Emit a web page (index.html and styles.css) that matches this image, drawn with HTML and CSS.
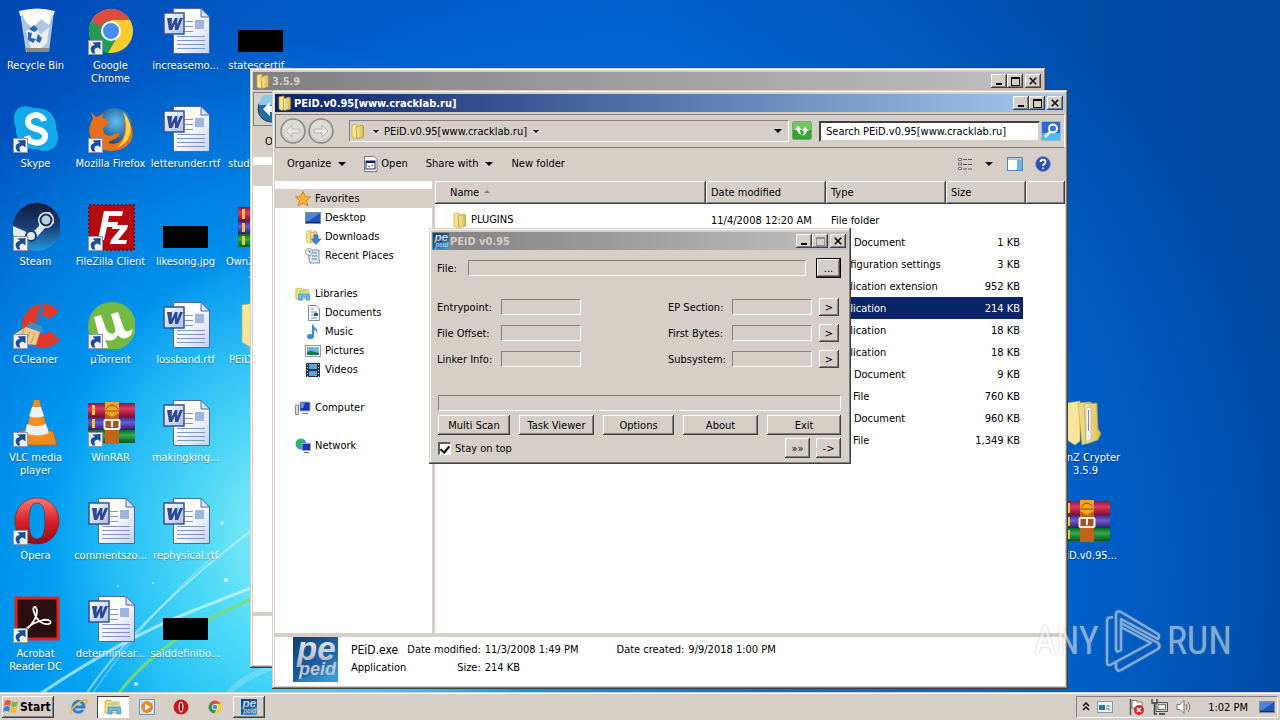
FILE: index.html
```html
<!DOCTYPE html>
<html lang="en">
<head>
<meta charset="utf-8">
<title>Desktop</title>
<link rel="stylesheet" href="styles.css">
</head>
<body>
<svg class="defs" aria-hidden="true">
  <defs>
    <linearGradient id="gPage" x1="0" y1="0" x2="1" y2="1"><stop offset="0.4" stop-color="#fff"/><stop offset="1" stop-color="#c3d3f3"/></linearGradient>
    <linearGradient id="gW" x1="0" y1="0" x2="1" y2="1"><stop offset="0" stop-color="#fff"/><stop offset="1" stop-color="#a9bce8"/></linearGradient>
    <linearGradient id="gFold" x1="0" y1="0" x2="1" y2="0"><stop offset="0" stop-color="#f7eba6"/><stop offset="1" stop-color="#d9b94e"/></linearGradient>
    <linearGradient id="gRed" x1="0" y1="0" x2="0" y2="1"><stop offset="0" stop-color="#8c1338"/><stop offset=".4" stop-color="#e03a66"/><stop offset="1" stop-color="#7d0d2c"/></linearGradient>
    <linearGradient id="gPur" x1="0" y1="0" x2="0" y2="1"><stop offset="0" stop-color="#37267e"/><stop offset=".4" stop-color="#6f5ccf"/><stop offset="1" stop-color="#2d1f6b"/></linearGradient>
    <linearGradient id="gGrn" x1="0" y1="0" x2="0" y2="1"><stop offset="0" stop-color="#0c6425"/><stop offset=".4" stop-color="#2fae4d"/><stop offset="1" stop-color="#0a5420"/></linearGradient>
    <linearGradient id="gSteam" x1="0" y1="0" x2="0" y2="1"><stop offset="0" stop-color="#131a3a"/><stop offset=".5" stop-color="#1a3f78"/><stop offset="1" stop-color="#1f9bd8"/></linearGradient>
    <linearGradient id="gOp" x1="0" y1="0" x2="0" y2="1"><stop offset="0" stop-color="#f57a72"/><stop offset=".5" stop-color="#d8232a"/><stop offset="1" stop-color="#8e0c12"/></linearGradient>
    <linearGradient id="gPe" x1="0" y1="0" x2="1" y2="1"><stop offset="0" stop-color="#0f3d73"/><stop offset=".6" stop-color="#1d63a6"/><stop offset="1" stop-color="#37a0d8"/></linearGradient>
    <linearGradient id="gSilver" x1="0" y1="0" x2="0" y2="1"><stop offset="0" stop-color="#fff"/><stop offset="1" stop-color="#a4adba"/></linearGradient>
    <radialGradient id="gFox" cx=".55" cy=".35" r=".6"><stop offset="0" stop-color="#5fc3ee"/><stop offset="1" stop-color="#123a7c"/></radialGradient>
    <symbol id="arrow" viewBox="0 0 15 15"><rect x=".5" y=".5" width="14" height="14" fill="#eef2f8" stroke="#8e98a8"/><path d="M4.500 13.500C1 9 3 5 7 5L4.500 2.500 12.500 2 12.500 9.500 10 7.500C6.500 8 5.500 10 7.500 13.500Z" fill="#1c4c96"/></symbol>
    <symbol id="word" viewBox="0 0 48 48"><path d="M11.500 1.500H39L47.500 10V46.500H11.500Z" fill="url(#gPage)" stroke="#4c68a8"/><path d="M39 1.500V10H47.500Z" fill="#dbe5f8" stroke="#4c68a8"/><path d="M23 14.500H31M23 19.500H31M23 24.500H31M15 29.500H43M15 33.500H43M15 37.500H43M15 41.500H43" stroke="#7f95c4"/><rect x="33" y="13" width="9" height="9" fill="#9fb4de"/><rect x="2" y="6" width="20" height="21" fill="url(#gW)" stroke="#33509c" stroke-width="1.500"/><path d="M5 11H10L9.500 18 13 11H15.500L15 18 18 11H21L16 23H13L13 17 10 23H7Z" fill="#2c4896"/></symbol>
    <symbol id="black" viewBox="0 0 48 48"><rect x="1" y="23" width="45" height="22"/></symbol>
    <symbol id="winrar" viewBox="0 0 48 48"><rect x="1" y="4" width="47" height="14" fill="url(#gRed)"/><rect x="1" y="18" width="47" height="13" fill="url(#gPur)"/><rect x="1" y="31" width="47" height="13" fill="url(#gGrn)"/><path d="M6.500 6V16M6.500 20V29M6.500 33V42" stroke="#f2c63c" stroke-width="3"/><rect x="18" y="3" width="14" height="42" fill="#c0641c"/><path d="M18 3H32V14L25 18 18 14Z" fill="#f0a524"/><path d="M19 10Q25 2 31 10M18 12H32" fill="none" stroke="#8a4a10"/><rect x="17.500" y="21" width="15" height="9" rx="1" fill="#a9551a" stroke="#f2f2f2" stroke-width="2"/><path d="M25 22V28" stroke="#fff" stroke-width="2"/></symbol>
    <symbol id="bigfolder" viewBox="0 0 48 48"><path d="M5 4L18 2V42L13 46 5 41Z" fill="#f5e69c" stroke="#c9a847" stroke-width=".6"/><path d="M16 4L29 3V43L20 46Z" fill="#ecd880" stroke="#c9a847" stroke-width=".6"/><path d="M22 5L35 4 36 30 39 34 36 41 24 45Z" fill="url(#gFold)" stroke="#b8973c" stroke-width=".6"/><path d="M24 9L29 8V40L24 43Z" fill="#f4f4f4" stroke="#aaa" stroke-width=".6"/><path d="M26.500 11V32" stroke="#8f8b84"/></symbol>
    <symbol id="folder" viewBox="0 0 16 16"><path d="M2 2L7 1V14L5 15.500 2 14Z" fill="#f6e68e" stroke="#c2a035" stroke-width=".7"/><path d="M6 4L12 2 13.500 3V14L7 15.500Z" fill="url(#gFold)" stroke="#b18e2a" stroke-width=".7"/></symbol>
    <symbol id="pe" viewBox="0 0 45 45"><rect width="45" height="45" fill="url(#gPe)"/><path d="M0 45L45 26V45Z" fill="#3fa5dd" opacity=".4"/><text x="4" y="23" font-family="Liberation Sans" font-weight="bold" font-style="italic" font-size="33" fill="url(#gSilver)">pe</text><text x="6" y="38" font-family="Liberation Sans" font-weight="bold" font-style="italic" font-size="18" fill="#bcc3ce">peid</text></symbol>
    <symbol id="chrome" viewBox="0 0 48 48"><circle cx="24" cy="24" r="22" fill="#fbcc2d"/><path d="M5 13A22 22 0 0 0 21 46L31 29 15 29Z" fill="#229b57"/><path d="M5 13L15 30 24 24 24 13Z" fill="#229b57"/><path d="M5 13A22 22 0 0 1 43 13H24A11 11 0 0 0 13.500 21Z" fill="#dd4b3e"/><circle cx="24" cy="24" r="10" fill="#fff"/><circle cx="24" cy="24" r="8" fill="#4b8bf0"/></symbol>
    <symbol id="opera" viewBox="0 0 48 48"><path fill-rule="evenodd" d="M25 1C38 1 47 11 47 24S38 47 25 47 3 37 3 24 12 1 25 1ZM25 6C19 6 17 13 17 24S19 42 25 42 33 35 33 24 31 6 25 6Z" fill="url(#gOp)" stroke="#8e0c12" stroke-width=".6"/></symbol>
    <symbol id="lib" viewBox="0 0 18 16"><path d="M1 14V3L2 1.500H7L8 3H15V14Z" fill="#f4de7c" stroke="#c9a93a" stroke-width=".8"/><path d="M4 4H13V6H4Z" fill="#a8d89a"/><path d="M4 15V8H16.500V15H13V11.500H8V15Z" fill="#6bb8e8" stroke="#3888c0" stroke-width=".7"/></symbol>
    <symbol id="screen" viewBox="0 0 16 16"><rect x=".5" y="2.500" width="15" height="11" fill="#1e56b5" stroke="#889"/><path d="M1 3H15L4 11H1Z" fill="#4d84da"/><path d="M1 12H15V13H1Z" fill="#0b2c66"/></symbol>
  </defs>
</svg>

<main class="desktop">
  <svg class="wallpaper" viewBox="0 0 1280 692" preserveAspectRatio="none" aria-hidden="true">
    <g fill="none" stroke-linecap="round">
      <path d="M40 694Q120 640 190 612T300 570" stroke="#d8fbff" stroke-width="3" opacity=".65"/>
      <path d="M86 694Q150 600 300 495" stroke="#e8ffff" stroke-width="2" opacity=".5"/>
      <path d="M92 694Q150 610 215 555" stroke="#fff" stroke-width="1" opacity=".5"/>
      <path d="M118 694Q170 625 300 580" stroke="#7fdc66" stroke-width="3" opacity=".85"/>
      <path d="M230 692Q250 670 300 660" stroke="#fff" stroke-width="6" opacity=".2"/>
    </g>
    <g fill="#fff" opacity=".7"><circle cx="222" cy="523" r="1.500"/><circle cx="226" cy="580" r="2"/><circle cx="153" cy="583" r="1"/><circle cx="118" cy="586" r="1"/><circle cx="136" cy="684" r="2"/></g>
  </svg>

  <section class="icons" aria-label="Desktop icons">
    <div class="ic"><svg viewBox="0 0 48 48"><path d="M8 5L42 4 37 45H14Z" fill="#cfdbe6" opacity=".85"/><path d="M7 4Q25 -1 43 4L41 9Q24 4 8 9Z" fill="#f0f5f9"/><path d="M11 9L17 3 25 7 32 2 40 8 37 18 29 12 21 21 14 15Z" fill="#fff"/><path d="M14 24L22 19 29 27 37 20 35 36 28 42 19 42Z" fill="#e9eff4"/><path d="M17 22L22 18 26 22 23 25 20 24ZM16 25L20 26 19 31 24 32 21 36 16 33ZM26 27L30 31 28 36 24 34Z" fill="#2a66c2"/><path d="M14 41H37V45H15Z" fill="#8d857f"/></svg><span>Recycle Bin</span></div>
    <div class="ic"><svg viewBox="0 0 48 48"><path d="M9 2C15 0 18 3 23 3 37 2 45 12 44 24 49 33 45 45 34 46 28 47 28 44 24 44 11 46 3 34 4 23 0 14 2 4 9 2Z" fill="#12a9ea"/><path d="M32 16C30 8 16 8 16 17 16 26 33 22 33 31 33 40 17 40 15 31" fill="none" stroke="#fff" stroke-width="6"/><use href="#arrow" x="1" y="33" width="15" height="15"/></svg><span>Skype</span></div>
    <div class="ic"><svg viewBox="0 0 48 48"><circle cx="25" cy="24" r="24" fill="url(#gSteam)"/><path d="M1 23L19 31 27 23 28 12 38 9 42 20 33 25 24 35 14 40 1 32Z" fill="#e3ebf3"/><circle cx="34" cy="17" r="8" fill="#e3ebf3"/><circle cx="34" cy="17" r="5.500" fill="#b8cfe6" stroke="#1b2b54" stroke-width="2"/><circle cx="19" cy="33" r="5" fill="#e3ebf3" stroke="#1b3c6c" stroke-width="2"/><use href="#arrow" x="1" y="33" width="15" height="15"/></svg><span>Steam</span></div>
    <div class="ic"><svg viewBox="0 0 48 48"><path d="M47 10L38 18C30 10 24 18 25 25 27 36 34 34 38 30L48 39C36 52 12 49 10 27 9 4 34-5 47 10Z" fill="#dd3a2c"/><path d="M30 5L25 24" stroke="#2b77b8" stroke-width="4" stroke-linecap="round"/><path d="M18 21L30 25 31 32 13 27Z" fill="#3e8ec8"/><path d="M14 26L28 31 24 44 3 42 1 34Z" fill="#f3c98c"/><path d="M12 28L8 39M18 30L14 41M23 32L19 42" stroke="#cb9350"/><use href="#arrow" x="1" y="33" width="15" height="15"/></svg><span>CCleaner</span></div>
    <div class="ic"><svg viewBox="0 0 48 48"><path d="M9 32H41L45 46H5Z" fill="#f08a1c" stroke="#c96206"/><path d="M22 1H27L37 36Q25 43 13 36Z" fill="#f28d22"/><path d="M20 8H29L32 17Q24 20 17 17ZM15 25Q24 29 34 25L37 34Q25 39 13 34Z" fill="#edf0f2"/><use href="#arrow" x="1" y="33" width="15" height="15"/></svg><span>VLC media player</span></div>
    <div class="ic"><svg viewBox="0 0 48 48"><use href="#opera"/><use href="#arrow" x="1" y="33" width="15" height="15"/></svg><span>Opera</span></div>
    <div class="ic"><svg viewBox="0 0 48 48"><rect x="4" y="3" width="42" height="41" fill="#2b0e10" stroke="#e2251b" stroke-width="3"/><path d="M13 35C20 31 25 22 25 16 24 9 20 12 22 17 25 27 32 30 37 29 41 27 37 24 31 25 24 27 18 29 13 35" fill="none" stroke="#fff" stroke-width="1.800"/><use href="#arrow" x="1" y="33" width="15" height="15"/></svg><span>Acrobat Reader DC</span></div>

    <div class="ic"><svg viewBox="0 0 48 48"><use href="#chrome"/><use href="#arrow" x="1" y="33" width="15" height="15"/></svg><span>Google Chrome</span></div>
    <div class="ic"><svg viewBox="0 0 48 48"><circle cx="27" cy="23" r="20" fill="url(#gFox)"/><path d="M4 7L9 12 16 9 15 13 19 14 22 19 16 23 17 28C24 35 29 26 33 29 29 36 21 35 22 38 34 42 41 29 37 14 45 18 48 27 44 36 36 49 13 50 5 35 0 27 3 18 6 14Z" fill="#e87018"/><path d="M36 7C49 20 45 38 29 43 39 36 42 22 36 7Z" fill="#fbd44a"/><use href="#arrow" x="1" y="33" width="15" height="15"/></svg><span>Mozilla Firefox</span></div>
    <div class="ic"><svg viewBox="0 0 48 48"><rect x="2" y="2" width="45" height="45" fill="#b50c10" stroke="#8a0508" stroke-width="2" stroke-dasharray="2 2"/><path d="M17 8H36L35 13H22L21 19H31L30 24H20L17 37H11Z" fill="#fff"/><path d="M26 22H41L40 26 31 37H40L39 41H23L24 37 33 26H25Z" fill="#fff"/><use href="#arrow" x="1" y="33" width="15" height="15"/></svg><span>FileZilla Client</span></div>
    <div class="ic"><svg viewBox="0 0 48 48"><circle cx="25" cy="25" r="24" fill="#74b943"/><path d="M7 16L14 14 19 28C22 35 30 34 28 27L24 13 31 11 37 28C39 32 43 30 46 28L44 34C39 39 34 38 31 34 28 40 22 41 18 38L21 47 15 47Z" fill="#fff"/><use href="#arrow" x="1" y="33" width="15" height="15"/></svg><span>µTorrent</span></div>
    <div class="ic"><svg viewBox="0 0 48 48"><use href="#winrar"/><use href="#arrow" x="1" y="33" width="15" height="15"/></svg><span>WinRAR</span></div>
    <div class="ic"><svg><use href="#word"/></svg><span>commentszo...</span></div>
    <div class="ic"><svg><use href="#word"/></svg><span>determinear...</span></div>

    <div class="ic"><svg><use href="#word"/></svg><span>increasemo...</span></div>
    <div class="ic"><svg><use href="#word"/></svg><span>letterunder.rtf</span></div>
    <div class="ic"><svg><use href="#black"/></svg><span>likesong.jpg</span></div>
    <div class="ic"><svg><use href="#word"/></svg><span>lossband.rtf</span></div>
    <div class="ic"><svg><use href="#word"/></svg><span>makingking...</span></div>
    <div class="ic"><svg><use href="#word"/></svg><span>rephysical.rtf</span></div>
    <div class="ic"><svg><use href="#black"/></svg><span>saiddefinitio...</span></div>

    <div class="ic"><svg><use href="#black"/></svg><span>statescertif...</span></div>
    <div class="ic ic-start"><svg></svg><span>stud</span></div>
    <div class="ic"><svg><use href="#winrar"/></svg><span>OwnZ Crypter 3.5.9</span></div>
    <div class="ic"><svg><use href="#bigfolder"/></svg><span>PEiD.v0.95...</span></div>
    <div class="ic ic-far5"><svg><use href="#bigfolder"/></svg><span>OwnZ Crypter 3.5.9</span></div>
    <div class="ic ic-far6"><svg><use href="#winrar"/></svg><span>PEiD.v0.95...</span></div>
  </section>

  <section class="win win-back" aria-label="3.5.9">
    <header class="title title-off"><svg class="i16"><use href="#folder"/></svg><h2>3.5.9</h2>
      <button class="cap" aria-label="Minimize"><i class="g-min"></i></button><button class="cap" aria-label="Maximize"><i class="g-max"></i></button><button class="cap cap-x" aria-label="Close"><svg viewBox="0 0 10 10"><path d="M1 1L9 9M9 1L1 9"/></svg></button></header>
    <div class="navbar"><svg class="round" viewBox="0 0 28 28"><circle cx="14" cy="14" r="13" fill="#1f6fa6" stroke="#334"/><path d="M2 10A12 12 0 0 1 26 10Z" fill="#8fc8e6"/><path d="M6 14L13 7V11H22V17H13V21Z" fill="#fff"/></svg></div>
    <div class="back-tools">Organize</div>
    <div class="back-side"></div>
    <div class="back-body"></div>
    <div class="back-foot"></div>
  </section>

  <section class="win win-front" aria-label="PEiD.v0.95[www.cracklab.ru]">
    <header class="title title-on"><svg class="i16"><use href="#folder"/></svg><h2>PEiD.v0.95[www.cracklab.ru]</h2>
      <button class="cap" aria-label="Minimize"><i class="g-min"></i></button><button class="cap" aria-label="Maximize"><i class="g-max"></i></button><button class="cap cap-x" aria-label="Close"><svg viewBox="0 0 10 10"><path d="M1 1L9 9M9 1L1 9"/></svg></button></header>
    <div class="navbar">
      <button class="plain" aria-label="Back"><svg class="round" viewBox="0 0 28 28"><circle cx="14" cy="14" r="12" fill="#cfcdc9" stroke="#8a8884" stroke-width="1.500"/><circle cx="14" cy="13" r="10" fill="#dddbd8"/><path d="M7 14L13 8V12H21V16H13V20Z" fill="#e9e8e6" stroke="#b7b4b0"/></svg></button>
      <button class="plain" aria-label="Forward"><svg class="round" viewBox="0 0 28 28"><circle cx="14" cy="14" r="12" fill="#cfcdc9" stroke="#8a8884" stroke-width="1.500"/><circle cx="14" cy="13" r="10" fill="#dddbd8"/><path d="M21 14L15 8V12H7V16H15V20Z" fill="#e9e8e6" stroke="#b7b4b0"/></svg></button>
      <div class="address"><svg class="i16"><use href="#folder"/></svg><i class="tri tri-s"></i><span>PEiD.v0.95[www.cracklab.ru]</span><i class="tri tri-s"></i><i class="tri tri-end"></i></div>
      <button class="plain" aria-label="Refresh"><svg class="i20" viewBox="0 0 20 20"><rect x=".5" y=".5" width="19" height="18" rx="2" fill="#2fa52f" stroke="#7f9f7f"/><path d="M1 1H19V9H1Z" fill="#6ccb60"/><path d="M6 5L3 9H5Q6 13 10 14 8 12 8 9H10ZM13 6L10 10H12Q12 13 10 15 14 14 15 10H17Z" fill="#fff"/></svg></button>
      <input class="search" aria-label="Search" value="Search PEiD.v0.95[www.cracklab.ru]">
      <button class="plain" aria-label="Search"><svg class="i20" viewBox="0 0 20 20"><rect x=".5" y=".5" width="19" height="19" rx="1" fill="#2d68d6" stroke="#9db4d8"/><path d="M1 12H19V19H1Z" fill="#4fb8ee"/><circle cx="12" cy="7.500" r="4" fill="#3c74dd" stroke="#fff" stroke-width="2"/><path d="M9 11L4 16" stroke="#fff" stroke-width="2.500"/></svg></button>
    </div>
    <div class="tools">
      <button class="tool">Organize<i class="tri"></i></button>
      <button class="tool"><svg class="i14" viewBox="0 0 14 16"><path d="M.5.500H10L13 3.500V15.500H.5Z" fill="#fff" stroke="#777"/><rect x="2" y="5" width="9" height="8" fill="#fff" stroke="#15206b"/><path d="M2 6H11" stroke="#15206b" stroke-width="2"/><path d="M4 10L6 11M7 10L9 9" stroke="#b33"/></svg>Open</button>
      <button class="tool">Share with<i class="tri"></i></button>
      <button class="tool">New folder</button>
      <button class="tool push" aria-label="Views"><svg class="i16" viewBox="0 0 16 16"><path d="M1.500 2.500h3v2h-3zM1.500 7h3v2h-3zM1.500 11.500h3v2h-3z" fill="#fff" stroke="#668"/><path d="M6 3.500H15M6 8.500H15M6 13H15" stroke="#555" stroke-dasharray="4 1"/></svg><i class="tri"></i></button>
      <button class="tool" aria-label="Preview pane"><svg class="i16" viewBox="0 0 16 16"><rect x=".5" y="1.500" width="15" height="13" fill="#fff" stroke="#4e86b8"/><path d="M1 2H15V4H1Z" fill="#9dc8e8"/><path d="M10 4H15V14H10Z" fill="#6fb2e2"/></svg></button>
      <button class="tool" aria-label="Help"><svg class="i16" viewBox="0 0 16 16"><circle cx="8" cy="8" r="7.500" fill="#2850b4" stroke="#8a99bd"/><path d="M5.500 6C5.500 3 10.500 3 10.500 6 10.500 8 8 8 8 10M8 11.500V13" fill="none" stroke="#fff" stroke-width="1.800"/></svg></button>
    </div>
    <div class="panes">
      <nav class="tree" aria-label="Folders">
        <ul>
          <li class="top on"><svg class="i16" viewBox="0 0 16 16"><path d="M8 .5L10.300 5.500 15.500 6 11.500 9.500 13 15 8 12 3 15 4.500 9.500.5 6 5.700 5.500Z" fill="#f8b73a" stroke="#d9821a"/></svg>Favorites</li>
          <li><svg class="i16"><use href="#screen"/></svg>Desktop</li>
          <li><svg class="i16" viewBox="0 0 16 16"><use href="#folder" width="14" height="15"/><path d="M9 6H13V10H16L11 15.500 6.500 10H9Z" fill="#2f8be0" stroke="#1760a8" stroke-width=".6"/></svg>Downloads</li>
          <li><svg class="i16" viewBox="0 0 16 16"><path d="M4 2H14V12L15 15H5L4 12Z" fill="#dde6ee" stroke="#8090a0"/><path d="M8 5H12M7 8H12M7 11H12" stroke="#5581b2"/><circle cx="4" cy="4" r="3.500" fill="#fff" stroke="#8898a8"/><path d="M4 2V4H6" stroke="#456" fill="none"/></svg>Recent Places</li>
        </ul>
        <ul>
          <li class="top"><svg class="i16"><use href="#lib"/></svg>Libraries</li>
          <li><svg class="i16" viewBox="0 0 16 16"><path d="M3.500.5H11L14.500 4V15.500H3.500Z" fill="#fff" stroke="#7c8ea0"/><path d="M6 4H9M6 7H12M6 10H9M6 13H12" stroke="#5d8fc4"/><path d="M9 8H13V11H9Z" fill="#335a88"/></svg>Documents</li>
          <li><svg class="i16" viewBox="0 0 16 16"><path d="M8 .5C9 4 14 5 12 10 12 7 10 6 9 6V13C8 16 2 16 2 12.500 2 10 5 9.500 7 10.500V.5Z" fill="#2e8fe0"/></svg>Music</li>
          <li><svg class="i16" viewBox="0 0 16 16"><rect x=".5" y="2.500" width="15" height="11" fill="#fff" stroke="#8b9baa"/><rect x="2" y="4" width="12" height="8" fill="#69b5e6"/><path d="M2 9L6 8 14 10V12H2Z" fill="#1d6b50"/></svg>Pictures</li>
          <li><svg class="i16" viewBox="0 0 16 16"><rect x="1" y="1" width="14" height="14" fill="#27303c"/><path d="M4 2H12V7H4ZM4 9H12V14H4Z" fill="#55a5e0"/><path d="M2.500 2V15M13.500 2V15" stroke="#dde" stroke-dasharray="1 2"/></svg>Videos</li>
        </ul>
        <ul>
          <li class="top"><svg class="i16" viewBox="0 0 16 16"><path d="M.5 5H3.500V14.500H.5Z" fill="#d8dbe0" stroke="#888"/><path d="M5 2H15V11H5Z" fill="#1a35b8" stroke="#a0a8b8"/><path d="M6 3H10L8 8H6Z" fill="#7290ee"/><path d="M7 13H13V14H7Z" fill="#777"/></svg>Computer</li>
        </ul>
        <ul>
          <li class="top"><svg class="i16" viewBox="0 0 16 16"><circle cx="6" cy="6" r="5.500" fill="#2b9fd6"/><path d="M2 3Q6-1 7 3 9 6 4 7 4 11 2 9Z" fill="#3bb44a"/><path d="M7 5.500H15.500V12.500H7Z" fill="#1a35b8" stroke="#a0a8b8"/><path d="M9 14.500H14" stroke="#667"/></svg>Network</li>
        </ul>
      </nav>
      <div class="files">
        <table>
          <colgroup><col class="c-name"><col class="c-date"><col class="c-type"><col class="c-size"><col></colgroup>
          <thead><tr><th class="th-name">Name<i class="sort"></i></th><th>Date modified</th><th>Type</th><th>Size</th><th></th></tr></thead>
          <tbody>
            <tr><td class="td-name"><svg class="i16"><use href="#folder"/></svg>PLUGINS</td><td>11/4/2008 12:20 AM</td><td>File folder</td><td></td></tr>
            <tr><td></td><td></td><td>Text Document</td><td>1 KB</td></tr>
            <tr><td></td><td></td><td>Configuration settings</td><td>3 KB</td></tr>
            <tr><td></td><td></td><td>Application extension</td><td>952 KB</td></tr>
            <tr class="sel"><td></td><td></td><td>Application</td><td>214 KB</td></tr>
            <tr><td></td><td></td><td>Application</td><td>18 KB</td></tr>
            <tr><td></td><td></td><td>Application</td><td>18 KB</td></tr>
            <tr><td></td><td></td><td>Text Document</td><td>9 KB</td></tr>
            <tr><td></td><td></td><td>SFX File</td><td>760 KB</td></tr>
            <tr><td></td><td></td><td>Text Document</td><td>960 KB</td></tr>
            <tr><td></td><td></td><td>SFX File</td><td>1,349 KB</td></tr>
          </tbody>
        </table>
      </div>
    </div>
    <footer class="details">
      <svg class="i45"><use href="#pe"/></svg>
      <div class="d-name"><strong>PEiD.exe</strong><span>Application</span></div>
      <dl><dt>Date modified:</dt><dd>11/3/2008 1:49 PM</dd><dt>Size:</dt><dd>214 KB</dd></dl>
      <dl class="d-last"><dt>Date created:</dt><dd>9/9/2018 1:00 PM</dd></dl>
    </footer>
  </section>

  <section class="win dialog" aria-label="PEiD v0.95">
    <header class="title title-off"><svg class="i16"><use href="#pe"/></svg><h2>PEiD v0.95</h2>
      <button class="cap" aria-label="Minimize"><i class="g-min"></i></button><button class="cap" aria-label="Maximize" disabled><i class="g-max"></i></button><button class="cap cap-x" aria-label="Close"><svg viewBox="0 0 10 10"><path d="M1 1L9 9M9 1L1 9"/></svg></button></header>
    <form class="form">
      <div class="f-file"><label for="file">File:</label><input id="file" class="sunk"><button type="button" class="btn btn-def">...</button></div>
      <div class="f-grid">
        <label for="ep">Entrypoint:</label><input id="ep" class="sunk"><label for="sec">EP Section:</label><input id="sec" class="sunk"><button type="button" class="btn">&gt;</button>
        <label for="off">File Offset:</label><input id="off" class="sunk"><label for="fb">First Bytes:</label><input id="fb" class="sunk"><button type="button" class="btn">&gt;</button>
        <label for="li">Linker Info:</label><input id="li" class="sunk"><label for="sub">Subsystem:</label><input id="sub" class="sunk"><button type="button" class="btn">&gt;</button>
      </div>
      <input class="sunk f-status" aria-label="Result">
      <div class="f-btns"><button type="button" class="btn">Multi Scan</button><button type="button" class="btn">Task Viewer</button><button type="button" class="btn">Options</button><button type="button" class="btn">About</button><button type="button" class="btn">Exit</button></div>
      <div class="f-last"><input type="checkbox" id="top" class="check" checked><label for="top">Stay on top</label><button type="button" class="btn">»»</button><button type="button" class="btn">-&gt;</button></div>
    </form>
  </section>

  <div class="mark"><span>ANY</span><svg viewBox="0 0 56 62"><path d="M8 7L3 8Q2 9 2 12V52Q2 57 7 54L46 33 16 17M11 41V4Q12 0 16 2L53 24Q55 26 53 29L16 9V40L11 42M11 53V58Q12 62 16 60L53 39Q56 36 53 33L16 13" fill="none" stroke="#fff" stroke-width="2.500" stroke-linejoin="round"/></svg><span>RUN</span></div>
</main>

<footer class="taskbar">
  <button class="start"><svg class="i18" viewBox="0 0 18 18"><path d="M3 3Q6 1 9 3L8 8Q5 6 2 8Z" fill="#e8572a"/><path d="M10 3Q13 5 16 3L15 8Q12 10 9 8Z" fill="#7cb93a"/><path d="M2 9Q5 7 8 9L7 14Q4 12 1 14Z" fill="#3a85d8"/><path d="M9 9Q12 11 15 9L14 14Q11 16 8 14Z" fill="#f6bb25"/></svg>Start</button>
  <button class="task" aria-label="Internet Explorer"><svg class="i18" viewBox="0 0 18 18"><path d="M13 12A5.500 5.500 0 1 1 14 9H5" fill="none" stroke="#2a7fd4" stroke-width="3"/><path d="M1 16C-1 12 10 1 16 2 18 3 16 6 15 7" fill="none" stroke="#e8b92c" stroke-width="1.500"/></svg></button>
  <button class="task task-open" aria-label="Explorer"><svg class="i18"><use href="#lib"/></svg></button>
  <button class="task" aria-label="Media Player"><svg class="i18" viewBox="0 0 18 18"><rect x="1.500" y="1.500" width="15" height="15" fill="#d4e6f5" stroke="#5b9bd0"/><circle cx="9" cy="9" r="6" fill="#f08a1c"/><path d="M7 5.500L12.500 9 7 12.500Z" fill="#fff"/></svg></button>
  <button class="task" aria-label="Opera"><svg class="i18" viewBox="0 0 18 18"><circle cx="9" cy="9" r="7.500" fill="#c8161d"/><ellipse cx="9" cy="9" rx="2.500" ry="5.500" fill="#f3e4e4"/><ellipse cx="9" cy="9" rx="1.200" ry="4.500" fill="#a50e14"/></svg></button>
  <button class="task" aria-label="Chrome"><svg class="i14"><use href="#chrome"/></svg></button>
  <button class="task task-up" aria-label="PEiD v0.95"><svg class="i16"><use href="#pe"/></svg></button>
  <div class="tray">
    <svg class="i10" viewBox="0 0 10 12"><path d="M2 5L5 2 8 5M2 9L5 6 8 9" fill="none" stroke="#000" stroke-width="1.500"/></svg>
    <svg class="i16" viewBox="0 0 16 16"><rect x=".5" y="2.500" width="15" height="11" fill="#e9f2f4" stroke="#8899a5"/><path d="M2 6H8V11H2Z" fill="#2d7884"/><path d="M9 7H13M9 10H13" stroke="#577"/></svg>
    <svg class="i18 t-gap" viewBox="0 0 18 18"><path d="M3.500 1V17" stroke="#555" stroke-width="1.500"/><path d="M5 2.500H10V4H15V10H5Z" fill="#fff" stroke="#777"/><circle cx="12" cy="12" r="5" fill="#d8242b"/><path d="M10 10L14 14M14 10L10 14" stroke="#fff" stroke-width="1.700"/></svg>
    <svg class="i18" viewBox="0 0 18 18"><path d="M5 4.500H16.500V13.500H5Z" fill="#c8c8c4" stroke="#555"/><path d="M7 6.500H14.500V11.500H7Z" fill="#eee" stroke="#777"/><path d="M8 16H14" stroke="#555" stroke-width="2"/><path d="M1 1V5H6V1M3.500 5V16H6" fill="none" stroke="#444" stroke-width="1.400"/></svg>
    <svg class="i18" viewBox="0 0 18 18"><path d="M2 6.500H5L9 2.500V15.500L5 11.500H2Z" fill="#f6f6f6" stroke="#777"/><path d="M11 6Q13 9 11 12M13 4Q16.500 9 13 14" fill="none" stroke="#777"/></svg>
    <time>1:02 PM</time>
    <svg class="i16"><use href="#screen"/></svg>
  </div>
</footer>
</body>
</html>
```
FILE: styles.css
```css
* { box-sizing: border-box; }
html, body { height: 100%; }
body {
  margin: 0;
  display: flex;
  flex-direction: column;
  overflow: hidden;
  font: 11px/13px "DejaVu Sans Condensed", Tahoma, "DejaVu Sans", sans-serif;
  color: #000;
}
button, input { font: inherit; color: inherit; }
button { padding: 0; border: 0; background: none; }
h2, ul, dl, dd { margin: 0; padding: 0; }
li { list-style: none; }
svg { display: block; flex: none; }
.defs { position: absolute; width: 0; height: 0; }
.i10 { width: 10px; height: 12px; }
.i14 { width: 14px; height: 16px; }
.i16 { width: 16px; height: 16px; }
.i18 { width: 18px; height: 18px; }
.i20 { width: 20px; height: 20px; }
.i45 { width: 45px; height: 45px; }

/* Desktop */
.desktop {
  flex: 1;
  position: relative;
  overflow: hidden;
  background:
    radial-gradient(ellipse 260px 290px at 310px 530px, rgba(165, 245, 246, .95), rgba(110, 232, 246, .65) 45%, rgba(30, 190, 248, 0)),
    radial-gradient(ellipse 480px 560px at 270px 600px, rgba(20, 200, 250, 1), rgba(0, 168, 248, .8) 50%, rgba(0, 125, 230, 0)),
    radial-gradient(ellipse 830px 720px at 500px 560px, #0482ee, rgba(0, 110, 224, .75) 60%, rgba(0, 76, 180, 0)),
    linear-gradient(90deg, #0046b0, #0058c0 50%, #0048a0);
}
.wallpaper { position: absolute; inset: 0; width: 100%; height: 100%; }
.icons {
  position: relative;
  display: grid;
  grid-auto-flow: column;
  grid-template-rows: repeat(7, 98px);
  grid-auto-columns: 75px;
  margin-left: -2px;
}
.ic {
  display: flex;
  flex-direction: column;
  align-items: center;
  gap: 4px;
  padding: 7px 0 0;
  color: #fff;
  text-align: center;
  text-shadow: 0 1px 1px rgba(0, 20, 60, .4);
}
.ic svg { width: 48px; height: 48px; }
.ic span { max-width: 75px; }
.ic-start { align-items: flex-start; padding-left: 5px; }
.ic-far5 { grid-column: 15; grid-row: 5; }
.ic-far6 { grid-column: 15; grid-row: 6; }

/* Windows */
.win {
  position: absolute;
  display: flex;
  flex-direction: column;
  padding: 4px 3px 3px;
  background: #d5cfc8;
  box-shadow: inset -1px -1px #404040, inset 1px 1px #d5cfc8, inset -2px -2px #808080, inset 2px 2px #fff;
}
.win-back { inset: 68px 234px 24px 250px; }
.win-front { inset: 90px 212px 3px 272px; }
.dialog { inset: 228px 429px auto 429px; }
.title {
  display: flex;
  align-items: center;
  height: 18px;
  padding: 0 2px;
}
.title h2 { flex: 1; margin-left: 1px; font-size: 11px; font-weight: bold; }
.title-on { color: #fff; background: linear-gradient(90deg, #0a246a, #a6caf0); }
.title-off { color: #d5cfc8; background: linear-gradient(90deg, #808080, #c0c0c0); }
.dialog .title { padding-left: 1px; }
.cap {
  display: grid;
  place-items: center;
  width: 16px;
  height: 14px;
  color: #000;
  background: #d5cfc8;
  box-shadow: inset -1px -1px #404040, inset 1px 1px #fff, inset -2px -2px #808080;
}
.cap-x { margin-left: 2px; }
.cap svg { width: 8px; height: 8px; fill: none; stroke: #000; stroke-width: 2; }
.g-min { width: 6px; height: 2px; margin-top: 6px; background: currentColor; }
.g-max { width: 9px; height: 9px; border: 1px solid currentColor; border-top-width: 2px; }
.cap:disabled { color: #909090; }
.navbar {
  display: flex;
  align-items: center;
  height: 34px;
  margin-top: 2px;
  padding: 0 3px;
  border: 1px solid #808080;
  border-right-color: #fff;
}
.round { width: 28px; height: 28px; }

.back-tools { padding: 9px 12px 13px; }
.back-side { height: 29px; margin-top: -4px; border-top: 8px solid #fff; }
.back-body { flex: 1; background: #fff; }
.back-foot { height: 53px; border-top: 4px solid #d5cfc8; background: #fff; }

/* Explorer */
.address {
  flex: 1;
  display: flex;
  align-items: center;
  height: 22px;
  margin: 0 3px 0 14px;
  border: 1px solid #fff;
  border-top-color: #808080;
  border-left-color: #808080;
}
.address .tri { margin: 0 5px 0 6px; }
.address .i16 { margin-right: 1px; }
.tri {
  width: 0;
  height: 0;
  border: 4px solid transparent;
  border-top-color: #000;
  border-bottom: 0;
}
.tri-s { border-width: 3px 3px 0; }
.address .tri-end { margin-left: auto; margin-right: 6px; }
.search {
  width: 221px;
  height: 21px;
  margin: 0 1px 0 7px;
  padding: 0 5px;
  background: #fff;
  border: 2px solid #d5cfc8;
  border-top-color: #404040;
  border-left-color: #404040;
}
.tools { display: flex; align-items: center; gap: 18px; height: 33px; padding: 0 14px 2px 12px; }
.tool { display: flex; align-items: center; gap: 7px; }
.tool .i14 { margin-right: -4px; }
.tool + .tool.push { margin-left: auto; }
.push { gap: 12px; margin-right: -4px; }
.tool:last-child { margin-left: -6px; }
.panes { flex: 1; display: flex; min-height: 0; }
.tree {
  width: 160px;
  padding-top: 8px;
  border-right: 3px solid #d5cfc8;
  background: #fff;
}
.tree ul { margin-bottom: 19px; }
.tree li { display: flex; align-items: center; gap: 4px; height: 19px; padding-left: 30px; }
.tree li.top { padding-left: 20px; }
.tree li.on { background: #d5cfc8; }
.files { flex: 1; background: #fff; }
table { width: 100%; table-layout: fixed; border-collapse: separate; border-spacing: 0; }
.c-name { width: 271px; }
.c-date, .c-type { width: 120px; }
.c-size { width: 80px; }
th {
  height: 23px;
  padding: 0 5px;
  font-weight: normal;
  text-align: left;
  background: #d5cfc8;
  box-shadow: inset -1px -1px #404040, inset 1px 1px #fff, inset -2px -2px #808080;
}
.th-name { padding-left: 15px; }
.sort {
  display: inline-block;
  margin: 0 0 3px 5px;
  border: 3px solid transparent;
  border-top: 0;
  border-bottom-color: #808080;
}
thead::after { content: ""; display: block; height: 5px; }
td {
  height: 22px;
  padding: 0 5px;
  white-space: nowrap;
}
.td-name { padding-left: 17px; }
.td-name svg { display: inline-block; margin-right: 3px; vertical-align: middle; }
td:nth-child(4) { padding-right: 3px; border-right: 3px solid transparent; background-clip: padding-box; text-align: right; }
.sel td { color: #fff; background-color: #0a246a; }
.details {
  display: flex;
  height: 53px;
  padding-left: 18px;
  border-top: 4px solid #d5cfc8;
  background: #fff;
  line-height: 18px;
}
.details strong { font-size: 12px; font-weight: normal; }
.d-name { display: flex; flex-direction: column; margin: 4px 1px 0 13px; }
.details dl {
  display: grid;
  grid-template-columns: auto auto;
  grid-auto-rows: 18px;
  column-gap: 4px;
  margin-top: 4px;
}
.details dt { text-align: right; }
.details .d-last { margin-left: 38px; }

/* PEiD dialog */
.form { display: flex; flex-direction: column; padding: 8px 7px 3px 5px; }
.sunk {
  min-width: 0;
  height: 16px;
  padding: 0 2px;
  background: transparent;
  border: 1px solid #fff;
  border-top-color: #808080;
  border-left-color: #808080;
}
.btn {
  height: 20px;
  background: #d5cfc8;
  box-shadow: inset -1px -1px #404040, inset 1px 1px #fff, inset -2px -2px #808080;
}
.btn-def { border: 1px solid #000; }
.f-file { display: flex; align-items: center; }
.f-file .sunk { flex: 1; margin: 0 10px 0 11px; }
.f-file .btn { width: 25px; }
.f-grid {
  display: grid;
  grid-template-columns: 64px 80px 1fr 80px 27px;
  grid-auto-rows: 26px;
  align-items: center;
  margin: 16px 2px 23px 0;
}
.f-grid label:nth-of-type(even) { justify-self: end; width: 64px; }
.f-grid .btn { width: 20px; height: 18px; margin-left: 7px; }
.f-status { margin-left: 1px; }
.f-btns { display: grid; grid-template-columns: 72px 75px 71px 75px 74px; justify-content: space-between; margin: 4px 0 3px 1px; }
.f-last { display: flex; align-items: center; gap: 6px; margin-left: 1px; }
.f-last label { flex: 1; }
.f-last .btn { width: 25px; }
.check {
  appearance: none;
  display: grid;
  place-items: center;
  width: 13px;
  height: 13px;
  margin: 0 -2px 0 0;
  background: #fff;
  border: 1px solid #fff;
  border-top: 2px solid #606060;
  border-left: 2px solid #606060;
}
.check:checked::after {
  content: "";
  width: 4px;
  height: 7px;
  border: solid #000;
  border-width: 0 2px 2px 0;
  transform: rotate(40deg);
}

/* Watermark */
.mark {
  position: absolute;
  right: 48px;
  bottom: 20px;
  display: flex;
  align-items: center;
  gap: 6px;
  font: 38px/44px "Liberation Sans Narrow", "Roboto Condensed", "Liberation Sans", sans-serif;
  color: #fff;
  opacity: .5;
  filter: drop-shadow(0 0 1px #888);
}
.mark svg { width: 56px; height: 62px; }

/* Taskbar */
.taskbar {
  display: flex;
  align-items: center;
  height: 28px;
  padding: 2px 2px 0;
  background: #d5cfc8;
  box-shadow: inset 0 1px #d5cfc8, inset 0 2px #fff;
}
.start {
  display: flex;
  align-items: center;
  height: 22px;
  margin-right: 9px;
  padding: 0 3px 0 0;
  font-size: 12px;
  font-weight: bold;
  box-shadow: inset -1px -1px #404040, inset 1px 1px #fff, inset -2px -2px #808080;
}
.task { display: grid; place-items: center; width: 32px; height: 22px; margin-right: 2px; }
.task-open { background: #fff; box-shadow: inset 1px 1px #404040, inset -1px -1px #fff; }
.task-up { box-shadow: inset -1px -1px #404040, inset 1px 1px #fff, inset -2px -2px #808080; }
.tray {
  display: flex;
  align-items: center;
  gap: 6px;
  height: 22px;
  margin-left: auto;
  padding: 0 2px 0 4px;
  border: 1px solid #fff;
  border-top-color: #808080;
  border-left-color: #808080;
}
.t-gap { margin-left: 8px; }
.tray time { margin: 0 5px 0 9px; }
```
